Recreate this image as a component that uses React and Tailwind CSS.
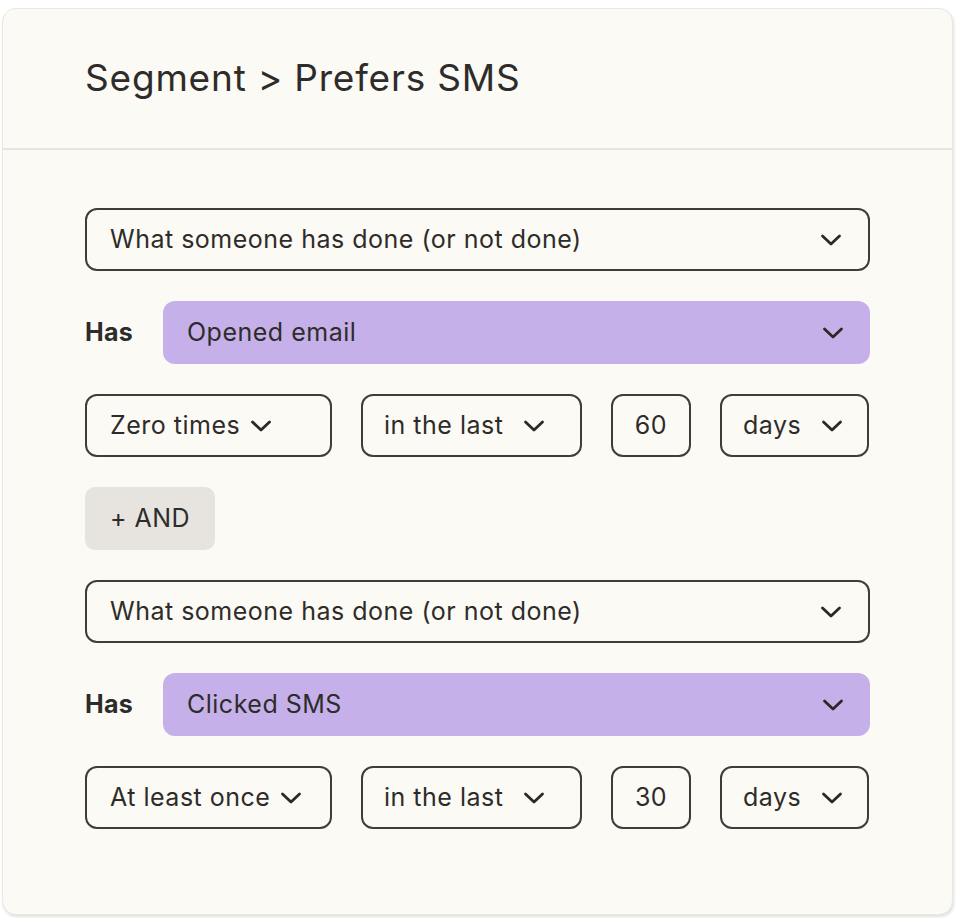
import React from "react";

function Chevron({ className = "" }) {
  return (
    <svg
      width="22"
      height="12"
      viewBox="0 0 22 12"
      fill="none"
      className={className}
    >
      <path
        d="M2.5 2 L11 10 L19.5 2"
        stroke="#2b2926"
        strokeWidth="2.8"
        strokeLinecap="round"
        strokeLinejoin="round"
      />
    </svg>
  );
}

function Box({ children, className = "" }) {
  return (
    <div
      className={`h-[63px] rounded-[12px] border-2 border-[#3f3d3a] flex items-center ${className}`}
    >
      {children}
    </div>
  );
}

function Block({ action, freq, freqW, num }) {
  return (
    <>
      <Box className="w-full pl-[23px] pr-[26px] justify-between">
        <span>What someone has done (or not done)</span>
        <Chevron />
      </Box>
      <div className="flex items-center h-[63px]">
        <span className="w-[78px] font-bold tracking-[0.3px]">Has</span>
        <div className="flex-1 h-full rounded-[12px] bg-[#c5b0e9] flex items-center justify-between pl-[24px] pr-[26px]">
          <span>{action}</span>
          <Chevron />
        </div>
      </div>
      <div className="flex items-center gap-[29px]">
        <Box className={`${freqW} pl-[23px] gap-[10px]`}>
          <span>{freq}</span>
          <Chevron />
        </Box>
        <Box className="w-[221px] pl-[21px] gap-[20px]">
          <span>in the last</span>
          <Chevron />
        </Box>
        <Box className="w-[80px] justify-center">
          <span>{num}</span>
        </Box>
        <Box className="w-[149px] pl-[21px] gap-[20px]">
          <span>days</span>
          <Chevron />
        </Box>
      </div>
    </>
  );
}

export default function App() {
  return (
    <div
      className="w-[956px] h-[918px] bg-white pt-[8px] pl-[2px] text-[#2e2c2a]"
      style={{ fontFamily: "Inter, 'Liberation Sans', sans-serif" }}
    >
      <div className="w-[951px] h-[907px] rounded-[14px] bg-[#fcfaf5] border border-[#ebe8e3] shadow-[1px_2px_3px_rgba(0,0,0,0.12)] flex flex-col">
        <div className="h-[141px] flex items-center pl-[82px] border-b-2 border-[#e8e5df]">
          <h1 className="text-[37px] leading-none tracking-[0.8px] pb-[2px]">
            Segment &gt; Prefers SMS
          </h1>
        </div>
        <div className="pt-[58px] pl-[82px] pr-[82px] flex flex-col gap-[30px] text-[25px] tracking-[0.5px]">
          <Block
            action="Opened email"
            freq="Zero times"
            freqW="w-[247px]"
            num="60"
          />
          <div className="w-[130px] h-[63px] rounded-[10px] bg-[#e7e4e0] flex items-center justify-center">
            + AND
          </div>
          <Block
            action="Clicked SMS"
            freq="At least once"
            freqW="w-[247px]"
            num="30"
          />
        </div>
      </div>
    </div>
  );
}
